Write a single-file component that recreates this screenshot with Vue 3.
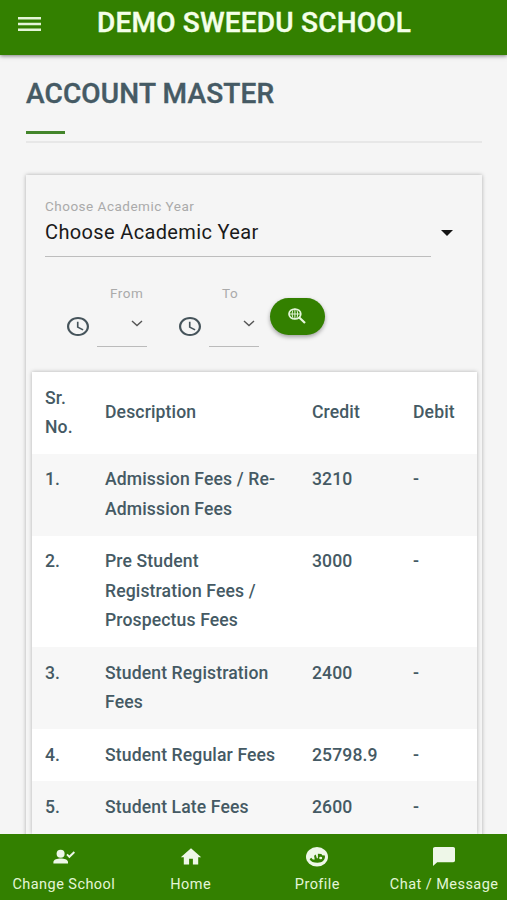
<template>
  <div class="app">
    <header class="topbar">
      <svg class="menu" viewBox="0 0 24 14" preserveAspectRatio="none">
        <path d="M0 0h24v2.4H0zM0 5.8h24v2.4H0zM0 11.6h24V14H0z" />
      </svg>
      <h1>DEMO SWEEDU SCHOOL</h1>
    </header>

    <main class="content">
      <h2>ACCOUNT MASTER</h2>
      <div class="accent"></div>
      <div class="divider"></div>

      <section class="card">
        <div class="year">
          <div class="yearField">
            <div class="label">Choose Academic Year</div>
            <div class="value">Choose Academic Year</div>
          </div>
          <span class="caret"></span>
        </div>

        <div class="range">
          <div v-for="d in dates" :key="d" class="date">
            <svg class="clock" viewBox="2 2 20 20" preserveAspectRatio="none">
              <path d="M11.99 2C6.47 2 2 6.48 2 12s4.47 10 9.99 10C17.52 22 22 17.52 22 12S17.52 2 11.99 2zM12 20c-4.42 0-8-3.58-8-8s3.58-8 8-8 8 3.58 8 8-3.58 8-8 8zm.5-13H11v6l5.25 3.15.75-1.23-4.5-2.67z" />
            </svg>
            <div class="dateField">
              <div class="label">{{ d }}</div>
              <svg class="chev" viewBox="0 0 12 7"><path d="M1 1l5 4.6L11 1" /></svg>
            </div>
          </div>
          <button class="search">
            <svg viewBox="0 0 18 16" preserveAspectRatio="none">
              <ellipse cx="6.9" cy="6" rx="5.9" ry="5" />
              <path d="M1.2 6h11.4M6.9 1v10" class="thin" />
              <ellipse cx="6.9" cy="6" rx="2.7" ry="4.8" class="thin" />
              <path d="M11 9.2l6 5.8" class="handle" />
            </svg>
          </button>
        </div>

        <table>
          <colgroup>
            <col class="cNo" />
            <col class="cDesc" />
            <col class="cCredit" />
            <col />
          </colgroup>
          <thead>
            <tr>
              <th>Sr. No.</th>
              <th>Description</th>
              <th>Credit</th>
              <th>Debit</th>
            </tr>
          </thead>
          <tbody>
            <tr v-for="(r, i) in rows" :key="i">
              <td>{{ i + 1 }}.</td>
              <td>{{ r.name }}</td>
              <td>{{ r.credit }}</td>
              <td>-</td>
            </tr>
          </tbody>
        </table>
      </section>
    </main>

    <nav class="tabs">
      <a class="tab">
        <svg viewBox="0 0 22 20" preserveAspectRatio="none">
          <circle cx="7.6" cy="6.8" r="4" />
          <path d="M.4 16.4v-1.3c0-2.5 4-3.6 7.3-3.6s7.3 1.1 7.3 3.6v1.3z" />
          <path d="M14 7.4l2.4 2.4 5-4.8" class="tick" />
        </svg>
        <span>Change School</span>
      </a>
      <a class="tab">
        <svg viewBox="0 0 22 20" preserveAspectRatio="none">
          <path d="M11 1.2L.8 10.2h3v7.2h5.3v-5.6h3.8v5.6h5.3v-7.2h3z" />
        </svg>
        <span>Home</span>
      </a>
      <a class="tab">
        <svg viewBox="0 0 22 20" preserveAspectRatio="none">
          <ellipse cx="11" cy="9.8" rx="11" ry="9.7" />
          <path class="cut" d="M3.6 12.2l1.6-1.4 1.7 1.6h1.8l-.6-3.6 1.6-1.2 1.2 3.6h1V6.8l3.6.2.6 1.2 2.8.3c.6 4.6-2.6 7.2-7.4 7.2-3.8 0-6.8-1.1-7.9-3.5z" />
          <ellipse cx="14.7" cy="11" rx="1.5" ry="1.3" />
        </svg>
        <span>Profile</span>
      </a>
      <a class="tab">
        <svg viewBox="0 0 22 20" preserveAspectRatio="none">
          <path d="M2 0h18.2c1 0 1.8.8 1.8 1.7v11.8c0 1-.8 1.7-1.8 1.7H4.2L0 19V1.7C0 .8.9 0 2 0z" />
        </svg>
        <span>Chat / Message</span>
      </a>
    </nav>
  </div>
</template>

<script setup>
const dates = ['From', 'To'];

const rows = [
  { name: 'Admission Fees / Re-Admission Fees', credit: '3210' },
  { name: 'Pre Student Registration Fees / Prospectus Fees', credit: '3000' },
  { name: 'Student Registration Fees', credit: '2400' },
  { name: 'Student Regular Fees', credit: '25798.9' },
  { name: 'Student Late Fees', credit: '2600' }
];
</script>

<style>
body { margin: 0; background: #f5f5f5; }
</style>

<style scoped>
.app { height: 900px; display: flex; flex-direction: column; overflow: hidden; background: #f5f5f5; color: #455a64; font-family: Roboto, sans-serif; }

.topbar { flex: none; height: 55px; box-sizing: border-box; padding: 0 18px; display: flex; align-items: flex-start; background: #338000; box-shadow: 0 1px 4px rgba(0,0,0,.5); z-index: 1; }
.menu { width: 23px; height: 14px; margin-top: 17px; fill: #e4f5d8; }
.topbar h1 { margin: 7px 0 0 56px; font-size: 28px; line-height: 32px; font-weight: 500; letter-spacing: .2px; color: #f4ffe9; white-space: nowrap; -webkit-text-stroke: .4px; }

.content { flex: 1; min-height: 0; overflow: hidden; padding: 22px 25px 0 26px; }
h2 { margin: 0; font-size: 28px; line-height: 34px; font-weight: 500; letter-spacing: .15px; -webkit-text-stroke: .4px; }
.accent { width: 39px; height: 3px; margin-top: 20px; background: #43852b; }
.divider { height: 2px; margin-top: 7px; background: #e7e7e7; }

.card { margin-top: 32px; height: 740px; padding: 23px 6px 0; background: #f5f5f5; box-shadow: 0 0 4px rgba(0,0,0,.3); }
.label { font-size: 13.5px; line-height: 16px; letter-spacing: .5px; color: #aaa; }
.year { display: flex; align-items: flex-start; padding-left: 13px; }
.yearField { width: 386px; height: 58px; border-bottom: 1px solid #bdbdbd; }
.value { margin-top: 6px; font-size: 20px; line-height: 24px; letter-spacing: .36px; color: #1a1a1a; }
.caret { margin: 32px 0 0 10px; border: 6.5px solid transparent; border-top: 6px solid #151515; border-bottom: 0; }

.range { display: flex; align-items: flex-start; height: 115px; padding-left: 35px; }
.date { display: flex; margin-right: 32px; padding-top: 28px; }
.date:nth-child(2) { margin-right: 11px; }
.clock { width: 22px; height: 19px; margin: 32px 8px 0 0; fill: #46545b; }
.dateField { width: 50px; height: 61px; border-bottom: 1px solid #bbb; display: flex; flex-direction: column; align-items: flex-end; }
.dateField .label { width: 37px; }
.chev { width: 12px; height: 7px; margin: 19px 4px 0 0; fill: none; stroke: #555; stroke-width: 1.4; }
.search { width: 55px; height: 37px; margin: 41px 0 0; padding: 0 2px 2px 0; border: 0; border-radius: 19px; background: #338000; display: flex; align-items: center; justify-content: center; box-shadow: 0 2px 4px rgba(0,0,0,.35); }
.search svg { width: 18px; height: 16px; fill: none; stroke: #e6f6dc; stroke-width: 1.7; }
.search .thin { stroke-width: 1; }
.search .handle { stroke-width: 2.2; }

table { width: 445px; table-layout: fixed; border-collapse: collapse; background: #fff; box-shadow: 0 0 4px rgba(0,0,0,.28); font-size: 17.6px; line-height: 29.6px; letter-spacing: .12px; }
.cNo { width: 60px; }
.cDesc { width: 207px; }
.cCredit { width: 101px; }
th, td { padding: 11.5px 13px 11.2px; text-align: left; font-weight: 500; vertical-align: top; }
th { vertical-align: middle; }
tbody tr:nth-child(odd) { background: #f7f7f7; }

.tabs { flex: none; height: 66px; display: grid; grid-template-columns: repeat(4, 1fr); background: #338000; z-index: 1; }
.tab { display: flex; flex-direction: column; align-items: center; padding: 13px 0 0 1px; color: #e3f6d7; }
.tab svg { width: 22px; height: 20px; fill: #eef7e8; }
.tab .cut { fill: #338000; }
.tab .tick { fill: none; stroke: #eef7e8; stroke-width: 1.9; }
.tab span { margin-top: 9px; font-size: 14.5px; line-height: 18px; letter-spacing: .45px; white-space: nowrap; }
</style>
